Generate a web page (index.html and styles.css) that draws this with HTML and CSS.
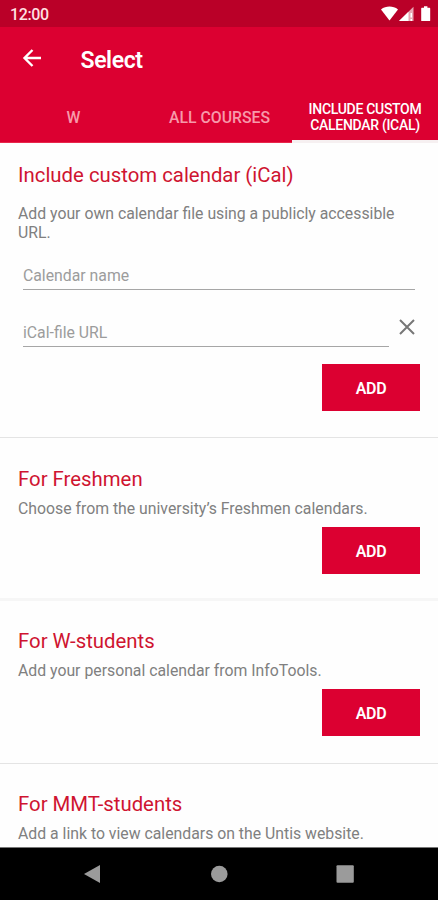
FILE: index.html
```html
<!DOCTYPE html>
<html lang="en">
<head>
<meta charset="utf-8">
<title>Select</title>
<link rel="stylesheet" href="styles.css">
</head>
<body>
<div class="screen">
  <div class="status">
    <span class="clock">12:00</span>
    <svg class="status-icons" width="52" height="18" viewBox="0 0 52 18">
      <path d="M0 4.400C5 .6 12 .6 17 4.400L8.500 15.600Z"/>
      <path d="M18 16L32.500 1.800V16Z" opacity=".65"/>
      <path d="M18 16L27.500 6.700V16ZM29.500 8H31v4.500h-1.500zM29.500 14H31v2h-1.500z"/>
      <path d="M40.800 2.800h2.200V1.200h3.400v1.600h2.200a.6.6 0 0 1 .6.600v12a.6.6 0 0 1-.6.600h-7.800a.6.6 0 0 1-.6-.6v-12a.6.6 0 0 1 .6-.6Z"/>
    </svg>
  </div>
  <header class="appbar">
    <div class="toolbar">
      <svg class="back" width="20" height="20" viewBox="0 0 20 20"><path d="M19 10H2.500M10.500 2L2.500 10l8 8"/></svg>
      <h1>Select</h1>
    </div>
    <nav class="tabs">
      <a class="tab">W</a>
      <a class="tab">ALL COURSES</a>
      <a class="tab active"><span>INCLUDE CUSTOM</span><span>CALENDAR (ICAL)</span></a>
    </nav>
  </header>
  <main class="content">
    <section class="card custom">
      <h2>Include custom calendar (iCal)</h2>
      <p>Add your own calendar file using a publicly accessible URL.</p>
      <div class="field"><span>Calendar name</span></div>
      <div class="row">
        <div class="field"><span>iCal-file URL</span></div>
        <svg class="clear" width="16" height="16" viewBox="0 0 16 16"><path d="M1 1l14 14M15 1L1 15"/></svg>
      </div>
      <button>ADD</button>
    </section>
    <section class="card">
      <h2>For Freshmen</h2>
      <p>Choose from the university’s Freshmen calendars.</p>
      <button>ADD</button>
    </section>
    <section class="card">
      <h2>For W-students</h2>
      <p>Add your personal calendar from InfoTools.</p>
      <button>ADD</button>
    </section>
    <section class="card">
      <h2>For MMT-students</h2>
      <p>Add a link to view calendars on the Untis website.</p>
    </section>
  </main>
  <footer class="navbar">
    <svg width="438" height="53" viewBox="0 0 438 53">
      <path d="M84 27L100 18V36Z"/>
      <circle cx="219.300" cy="27" r="8.300"/>
      <rect x="336.500" y="18.300" width="17.300" height="17.400" rx="1"/>
    </svg>
  </footer>
</div>
</body>
</html>
```
FILE: styles.css
```css
* { box-sizing: border-box; }
body { margin: 0; font-family: Roboto, sans-serif; background: #fff; }
h1, h2, p { margin: 0; font-weight: 400; white-space: nowrap; }
.screen { width: 438px; height: 900px; display: flex; flex-direction: column; overflow: hidden; }
.status { height: 27px; flex: none; background: #ba0028; display: flex; justify-content: space-between; padding: 5px 5px 0 10px; }
.clock { color: #ffdfe0; font-size: 16px; letter-spacing: -0.4px; font-weight: 500; line-height: 20px; }
.status-icons { fill: #fff; }
.appbar { height: 116px; flex: none; background: #dc0031; color: #fff; display: flex; flex-direction: column; border-bottom: 1px solid #e8274b; }
.toolbar { height: 64px; display: flex; align-items: center; padding-left: 22px; }
.back { fill: none; stroke: #fff; stroke-width: 2.400; margin-bottom: 2px; }
h1 { margin-left: 38.500px; font-size: 23px; letter-spacing: -0.4px; font-weight: 600; line-height: 30px; padding-top: 3px; }
.tabs { flex: 1; display: grid; grid-template-columns: 146px 146px 146px; margin-bottom: -1px; }
.tab { display: flex; flex-direction: column; align-items: center; justify-content: center; font-size: 15.800px; font-weight: 500; line-height: 16px; color: #f799aa; padding: 2px 0 0 1px; white-space: nowrap; }
.tab.active { color: #fff; font-size: 14px; letter-spacing: -0.3px; padding: 2px 0 0; border-bottom: 3px solid #f6f0f1; }
.content { flex: 1; min-height: 0; overflow: hidden; background: #fefefe; }
.card { height: 163px; padding: 29px 18px 0; border-bottom: 1px solid #e4e4e4; display: flex; flex-direction: column; align-items: flex-start; }
.card:nth-child(2) { border-bottom: 3px solid #f6f6f6; }
.card:nth-child(n+3) { padding-top: 28px; }
.card.custom { height: 295px; padding-top: 20px; }
h2 { font-size: 20.350px; line-height: 25px; color: #cf1430; }
p { font-size: 15.800px; line-height: 19px; color: #808080; margin-top: 7px; }
.custom p { white-space: normal; margin-top: 16px; }
.field { height: 32px; margin: 16px 5px 0; align-self: stretch; border-bottom: 1px solid #a6a6a6; color: #9c9c9c; font-size: 15.800px; line-height: 36px; }
.field span { display: block; white-space: nowrap; }
.row { display: flex; align-self: stretch; align-items: flex-start; }
.row .field { width: 366px; margin: 25px 0 0 5px; }
.clear { margin: 29px 0 0 10px; fill: none; stroke: #777; stroke-width: 2; }
button { width: 98px; height: 47px; flex: none; align-self: flex-end; border: 0; padding: 1px 0 0; margin-top: 9px; background: #dc0031; color: #fff; font: 600 16px Roboto, sans-serif; letter-spacing: -0.3px; }
.custom button { margin-top: 17px; }
.navbar { height: 53px; flex: none; background: #000; border-top: 1px solid #777; }
.navbar svg { display: block; fill: #9b9b9b; margin-top: -1px; }
```
